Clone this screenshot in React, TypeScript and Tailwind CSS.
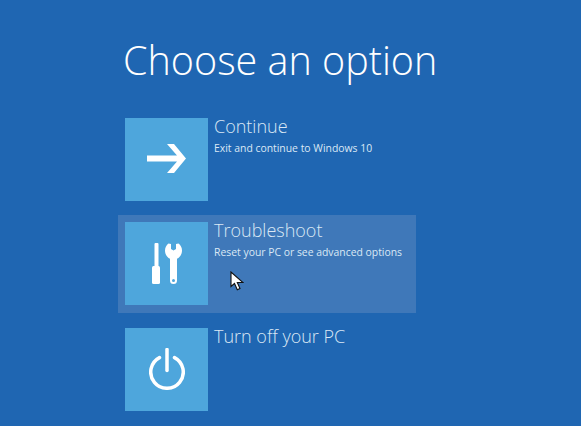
const options = [
  { title: "Continue", detail: "Exit and continue to Windows 10", icon: "arrow", row: "" },
  { title: "Troubleshoot", detail: "Reset your PC or see advanced options", icon: "tools", row: "bg-[#3f78b9]" },
  { title: "Turn off your PC", detail: "", icon: "power", row: "mt-[2px]" },
];

function TileIcon({ name }: { name: string }) {
  if (name === "arrow") {
    return (
      <svg className="-mt-[2px]" width="39" height="29" viewBox="0 0 39 29">
        <path d="M20 0h7l12 14.500L27 29h-7l10-11.500H0v-6h30z" fill="#fff" />
      </svg>
    );
  }
  if (name === "tools") {
    return (
      <svg width="30" height="41" viewBox="0 0 30 41">
        <rect x="2.500" y="0" width="4" height="25" rx="1" fill="#fff" />
        <rect x="0" y="23" width="8" height="18" rx="1.500" fill="#fff" />
        <path
          fillRule="evenodd"
          clipRule="evenodd"
          d="M16.500 0.500L19 1v5l2.500 1.500L24 6V1l2.500-0.500C28.500 2 30 4.500 30 7.500c0 3.800-2 6.800-5 8.300v21.700a3.500 3.500 0 0 1-7 0V15.800c-3-1.500-5-4.500-5-8.300 0-3 1.500-5.500 3.500-7zM21.500 36a1.500 1.500 0 1 0 0 3 1.500 1.500 0 0 0 0-3z"
          fill="#fff"
        />
      </svg>
    );
  }
  return (
    <svg className="-mt-[2px]" width="36" height="42" viewBox="0 0 36 42" fill="none">
      <path d="M18 1.500v21" stroke="#fff" strokeWidth="3.500" strokeLinecap="round" />
      <path d="M10.500 9.600A16.250 16.250 0 1 0 25.500 9.600" stroke="#fff" strokeWidth="3.500" strokeLinecap="round" />
    </svg>
  );
}

export default function App() {
  return (
    <div className="relative h-[426px] w-[581px] overflow-hidden bg-[#1f66b2] pl-[118px] font-['Open_Sans',sans-serif] text-white">
      <h1 className="whitespace-nowrap pl-[5px] pt-[32px] text-[39.5px] font-light leading-[56px]">Choose an option</h1>

      <div className="mt-[23px] flex w-[298px] flex-col gap-[6px]">
        {options.map((option) => (
          <div key={option.title} className={`flex h-[98px] items-start gap-[6px] py-[7px] pl-[7px] ${option.row}`}>
            <div className="flex h-[83px] w-[83px] shrink-0 items-center justify-center bg-[#4ea6dc]">
              <TileIcon name={option.icon} />
            </div>
            <div className="-mt-[3px] min-w-0 text-[#dbe8f5]">
              <div className="text-[18px] font-light leading-[22px]">{option.title}</div>
              {option.detail && <div className="mt-[4px] whitespace-nowrap text-[10.4px] leading-[15px]">{option.detail}</div>}
            </div>
          </div>
        ))}
      </div>

      <svg className="absolute left-[230px] top-[271px]" width="14" height="20" viewBox="0 0 14 20">
        <path d="M1 1v14.500l3.500-3 2.800 6.200 2.700-1.200-2.700-6H13z" fill="#fff" stroke="#111" strokeWidth="1.100" />
      </svg>
    </div>
  );
}
